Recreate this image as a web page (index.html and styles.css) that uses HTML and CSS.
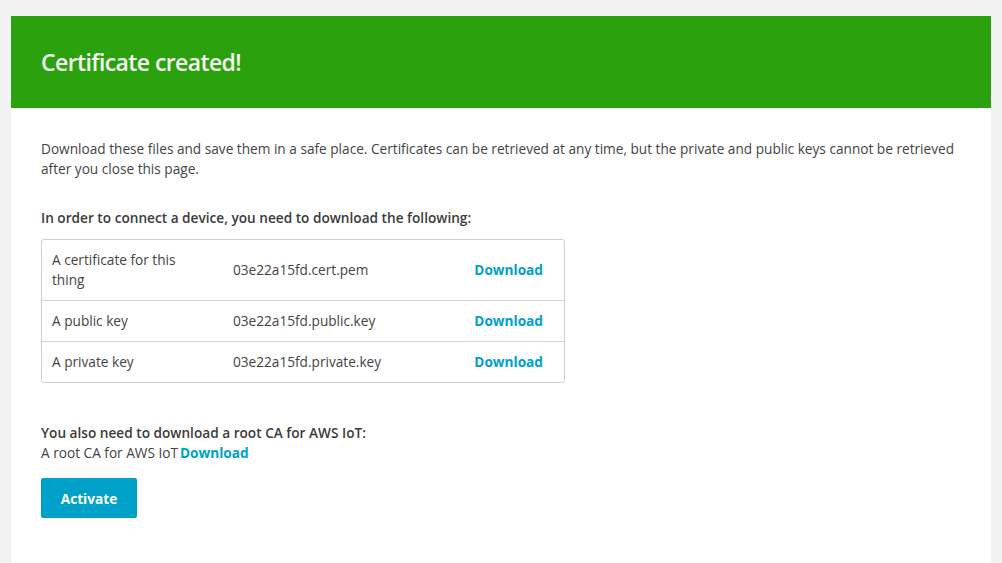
FILE: index.html
```html
<!DOCTYPE html>
<html>
<head>
<meta charset="utf-8">
<link rel="stylesheet" href="styles.css">
</head>
<body>
<div class="page">
  <div class="card">
    <div class="card-header">
      <h1 class="title">Certificate created!</h1>
    </div>
    <div class="card-body">
      <p class="intro">Download these files and save them in a safe place. Certificates can be retrieved at any time, but the private and public keys cannot be retrieved after you close this page.</p>
      <p class="subhead">In order to connect a device, you need to download the following:</p>
      <div class="files">
        <div class="row">
          <div class="label">A certificate for this thing</div>
          <div class="fname">03e22a15fd.cert.pem</div>
          <a class="link" href="#">Download</a>
        </div>
        <div class="row">
          <div class="label">A public key</div>
          <div class="fname">03e22a15fd.public.key</div>
          <a class="link" href="#">Download</a>
        </div>
        <div class="row">
          <div class="label">A private key</div>
          <div class="fname">03e22a15fd.private.key</div>
          <a class="link" href="#">Download</a>
        </div>
      </div>
      <p class="subhead root-head">You also need to download a root CA for AWS IoT:</p>
      <p class="root-line">A root CA for AWS IoT<a class="link" href="#">Download</a></p>
      <button class="btn">Activate</button>
    </div>
  </div>
</div>
</body>
</html>
```

FILE: styles.css
```css
html, body {
  margin: 0;
  padding: 0;
  background: #f2f2f2;
  font-family: "Open Sans", "Noto Sans", "Liberation Sans", sans-serif;
  font-size: 13.65px;
  color: #444;
}
.page {
  padding: 16px 11px 0 11px;
  height: 547px;
  overflow: hidden;
}
.card {
  background: #fff;
  height: 100%;
}
.card-header {
  background: #2ca10e;
  height: 92px;
  display: flex;
  align-items: center;
  padding: 0 30px;
}
.title {
  margin: 0;
  color: #f4f7f2;
  font-size: 23px;
  font-weight: 600;
  letter-spacing: -0.6px;
}
.card-body {
  padding: 31px 30px 0 30px;
}
p {
  margin: 0;
  line-height: 20px;
}
.intro {
  margin-bottom: 29px;
}
.subhead {
  font-weight: 600;
  color: #3b3b3b;
}
.files {
  margin-top: 11px;
  width: 522px;
  border: 1px solid #d0d0d0;
  border-radius: 3px;
}
.row {
  display: grid;
  grid-template-columns: 140px 1fr auto;
  align-items: center;
  padding: 10px 21px 10px 10px;
  border-top: 1px solid #d5d5d5;
  line-height: 20px;
}
.row:first-child {
  border-top: none;
}
.fname {
  padding-left: 41px;
}
.link {
  color: #00a1c9;
  font-weight: 700;
  text-decoration: none;
}
.root-head {
  margin-top: 40px;
}
.root-line .link {
  margin-left: 2px;
}
.btn {
  margin-top: 15px;
  width: 96px;
  height: 40px;
  border: none;
  border-radius: 2px;
  background: #00a1c9;
  color: #fff;
  font-family: inherit;
  font-size: 13.65px;
  font-weight: 700;
  cursor: pointer;
}
```
